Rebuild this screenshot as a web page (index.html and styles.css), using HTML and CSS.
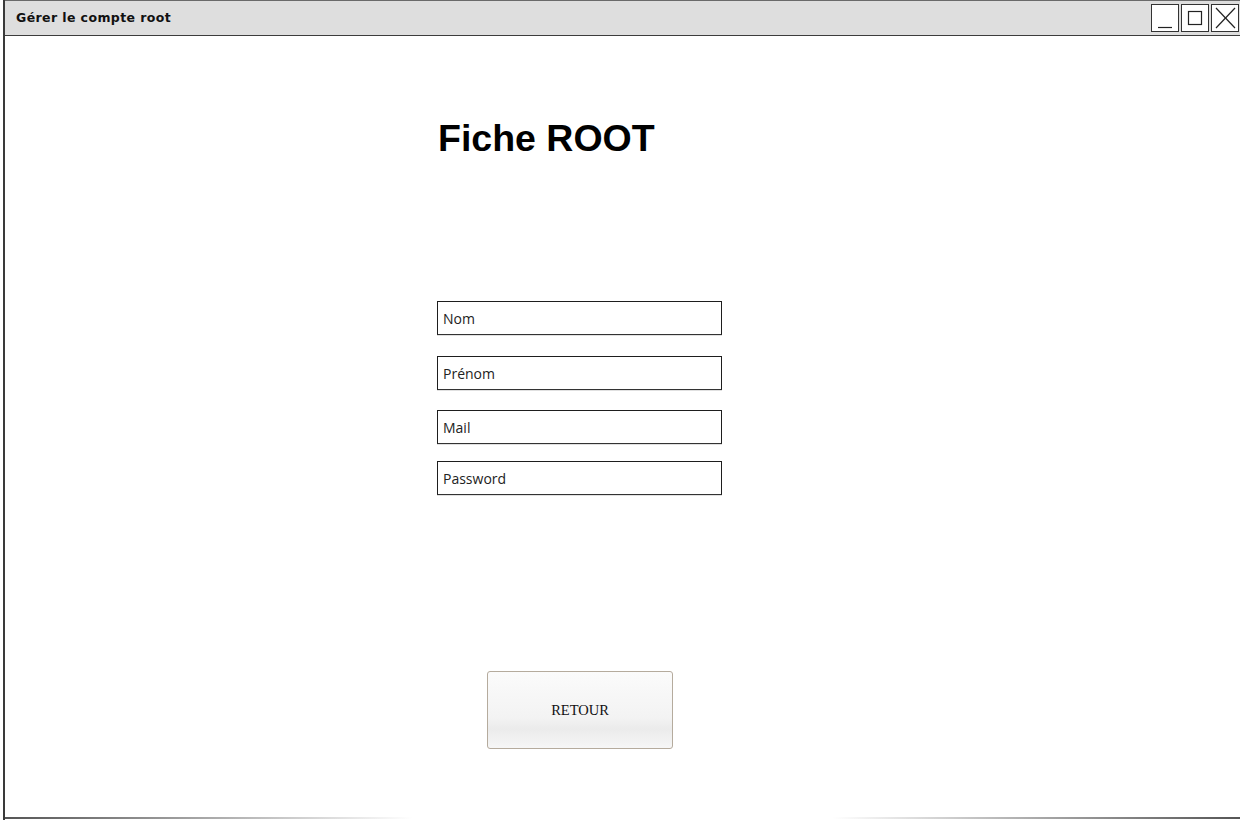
FILE: index.html
```html
<!DOCTYPE html>
<html lang="fr">
<head>
<meta charset="utf-8">
<title>Gérer le compte root</title>
<link rel="stylesheet" href="styles.css">
</head>
<body>
<div class="window">
  <div class="titlebar">
    <span class="title">Gérer le compte root</span>
    <div class="controls">
      <span class="ctl"><svg width="26" height="26" viewBox="0 0 26 26"><line x1="6" y1="22.5" x2="20" y2="22.5" stroke="#222" stroke-width="1.2"/></svg></span>
      <span class="ctl"><svg width="26" height="26" viewBox="0 0 26 26"><rect x="6.5" y="6.5" width="13" height="13" fill="none" stroke="#222" stroke-width="1.2"/></svg></span>
      <span class="ctl"><svg width="26" height="26" viewBox="0 0 26 26"><line x1="4" y1="3" x2="23" y2="23" stroke="#222" stroke-width="1.2"/><line x1="23" y1="3" x2="4" y2="23" stroke="#222" stroke-width="1.2"/></svg></span>
    </div>
  </div>
  <div class="content">
    <h1 class="heading">Fiche ROOT</h1>
    <div class="form">
      <div class="field f1">Nom</div>
      <div class="field f2">Prénom</div>
      <div class="field f3">Mail</div>
      <div class="field f4">Password</div>
    </div>
    <button class="btn">RETOUR</button>
  </div>
  <div class="bottomline"></div>
</div>
</body>
</html>
```
FILE: styles.css
```css
html, body {
  margin: 0;
  padding: 0;
  background: #ffffff;
}
.window {
  margin-left: 3px;
  width: 1237px;
  height: 820px;
  border-left: 2px solid #3a3a3a;
  box-sizing: border-box;
  display: flex;
  flex-direction: column;
}
.titlebar {
  height: 36px;
  box-sizing: border-box;
  background: #dedede;
  border-top: 1px solid #6a6a6a;
  border-bottom: 1px solid #3c3c3c;
  display: flex;
  align-items: flex-start;
  justify-content: space-between;
}
.title {
  font-family: "DejaVu Sans", sans-serif;
  font-weight: bold;
  font-size: 12.5px;
  color: #111;
  margin-left: 11px;
  margin-top: 9px;
  letter-spacing: 0.4px;
}
.controls {
  display: flex;
  gap: 2px;
  margin-top: 3px;
  margin-right: 1px;
}
.ctl {
  width: 28px;
  height: 28px;
  box-sizing: border-box;
  border: 1px solid #333;
  background: #fff;
  display: flex;
  align-items: center;
  justify-content: center;
}
.ctl svg { display: block; }
.content {
  flex: 1;
  padding-left: 432px;
  display: flex;
  flex-direction: column;
  align-items: flex-start;
}
.heading {
  margin: 84px 0 0 1px;
  font-family: "Liberation Sans", Arial, sans-serif;
  font-weight: bold;
  font-size: 37.5px;
  line-height: 37px;
  color: #000;
}
.form {
  margin-top: 144px;
  display: flex;
  flex-direction: column;
}
.field {
  width: 285px;
  height: 34px;
  box-sizing: border-box;
  border: 1px solid #1e1e1e;
  border-bottom-color: #333;
  box-shadow: 0 1px 0 rgba(0,0,0,0.12);
  font-family: "Open Sans", sans-serif;
  font-size: 14px;
  color: #222;
  padding-left: 5px;
  display: flex;
  align-items: center;
}
.f2 { margin-top: 21px; }
.f3 { margin-top: 20px; }
.f4 { margin-top: 17px; }
.btn {
  margin-top: 176px;
  margin-left: 50px;
  width: 186px;
  height: 78px;
  border: 1px solid #b5ab9d;
  border-radius: 3px;
  background: linear-gradient(#fbfbfb 0%, #f3f3f3 60%, #ebebeb 75%, #f6f6f6 100%);
  font-family: "Liberation Serif", "Times New Roman", serif;
  font-size: 14.5px;
  color: #111;
  padding: 0;
}
.bottomline {
  height: 2px;
  margin-bottom: 1px;
  background: linear-gradient(to right, #555 0%, #bbb 20%, #fff 33%, #fff 67%, #bbb 80%, #555 100%);
}
```
